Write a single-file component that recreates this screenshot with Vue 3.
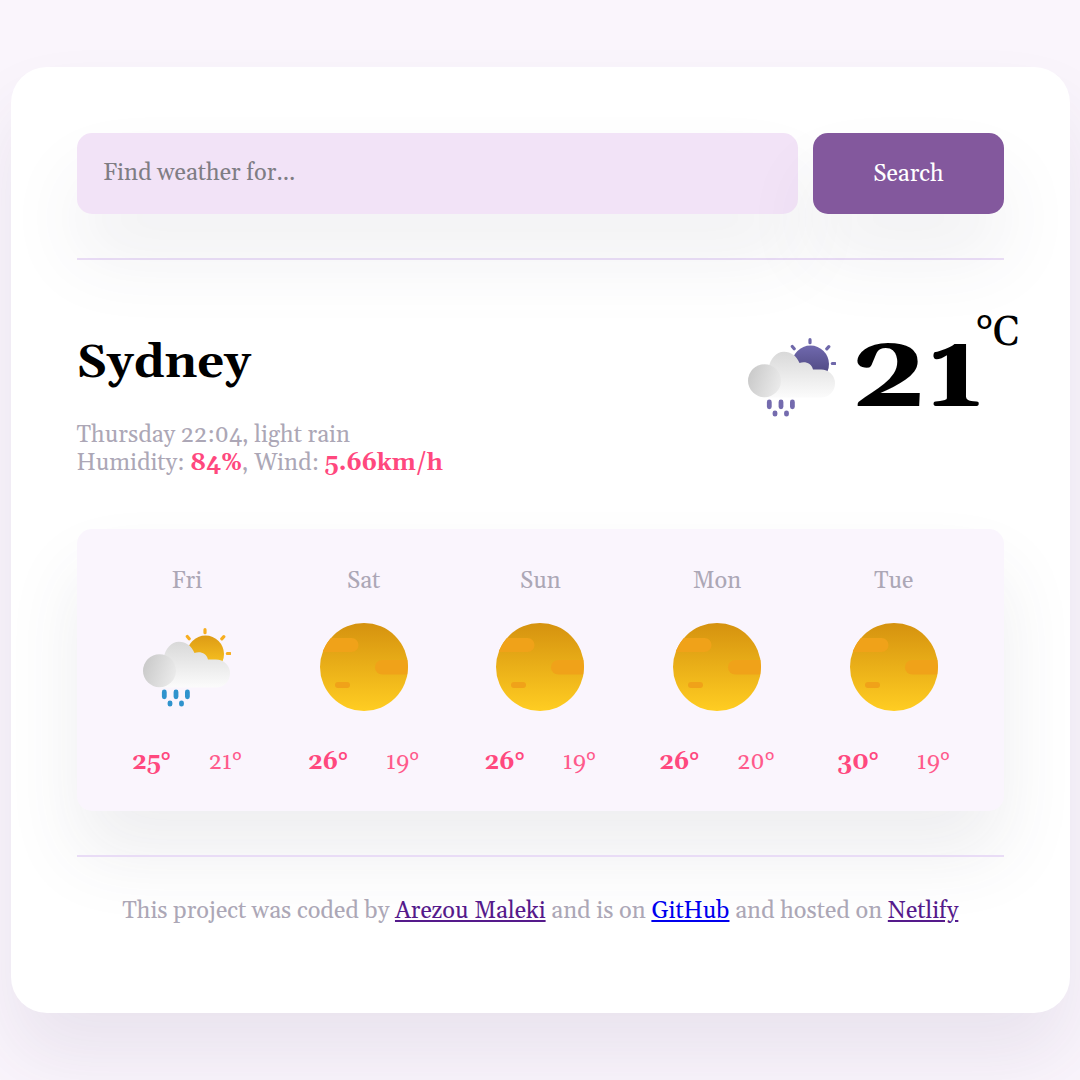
<script setup>
const days = [
  { name: 'Fri', icon: 'rain', max: 25, min: 21 },
  { name: 'Sat', icon: 'sun', max: 26, min: 19 },
  { name: 'Sun', icon: 'sun', max: 26, min: 19 },
  { name: 'Mon', icon: 'sun', max: 26, min: 20 },
  { name: 'Tue', icon: 'sun', max: 30, min: 19 },
]
</script>

<template>
  <div class="page">
    <svg class="defs" width="0" height="0" aria-hidden="true">
      <defs>
        <linearGradient id="sunFill" x1="0" y1="0" x2="0" y2="1">
          <stop offset="0" stop-color="#d5920f" />
          <stop offset="1" stop-color="#ffcd22" />
        </linearGradient>
        <linearGradient id="dayFill" x1="0" y1="0" x2="0" y2="1">
          <stop offset="0" stop-color="#dd9b15" />
          <stop offset="1" stop-color="#ffcc24" />
        </linearGradient>
        <linearGradient id="nightFill" x1="0" y1="0" x2="0" y2="1">
          <stop offset="0" stop-color="#7069ae" />
          <stop offset="1" stop-color="#453f74" />
        </linearGradient>
        <linearGradient id="cloudFill" gradientUnits="userSpaceOnUse" x1="0" y1="18" x2="0" y2="65">
          <stop offset="0" stop-color="#d8d8d8" />
          <stop offset="1" stop-color="#fcfcfc" />
        </linearGradient>
        <linearGradient id="puffFill" x1="0" y1="0.3" x2="1" y2="0.65">
          <stop offset="0" stop-color="#c9c9c9" />
          <stop offset="1" stop-color="#ebebeb" />
        </linearGradient>
        <clipPath id="sunClip"><circle cx="44" cy="44" r="44" /></clipPath>
        <g id="cloud">
          <path
            d="M16 64.500V35h4.500C22.500 26 28 18.800 36 18.800c7 0 12.500 4 15.500 11.200 5.500-2 12 0 13.500 6.500h8a14 14 0 0 1 0 28z"
            fill="url(#cloudFill)"
          />
          <circle cx="16.500" cy="47.700" r="16.500" fill="url(#puffFill)" />
        </g>
        <g id="rays" fill="none" stroke-width="3.200" stroke-linecap="round">
          <path d="M62 6.700v3M44.300 13.500l1.900 2.200M80.800 13.700l-2 2.100M84.300 30.500h2.700" />
        </g>
        <g id="drops" stroke-width="4.800" stroke-linecap="round">
          <path d="M21.300 69v4.800M33 69v4.800M44.400 69v4.800M27 79.800v1.400M38.500 79.800v1.400" />
        </g>
      </defs>
    </svg>

    <main class="card">
      <form class="search" @submit.prevent>
        <input type="text" placeholder="Find weather for..." />
        <button type="submit">Search</button>
      </form>

      <section class="current">
        <div>
          <h1>Sydney</h1>
          <p class="details">
            Thursday 22:04, light rain<br />
            Humidity: <strong>84%</strong>, Wind: <strong>5.66km/h</strong>
          </p>
        </div>
        <div class="now">
          <svg class="icon" viewBox="0 0 88 88">
            <use href="#rays" stroke="#6f68aa" />
            <circle cx="62.500" cy="31" r="18.500" fill="url(#nightFill)" />
            <use href="#cloud" />
            <use href="#drops" stroke="#746bae" />
          </svg>
          <span class="value">21</span>
          <span class="unit">°C</span>
        </div>
      </section>

      <section class="forecast">
        <div v-for="day in days" :key="day.name" class="day">
          <div class="name">{{ day.name }}</div>
          <svg v-if="day.icon === 'sun'" class="icon" viewBox="0 0 88 88">
            <circle cx="44" cy="44" r="44" fill="url(#sunFill)" />
            <g clip-path="url(#sunClip)" fill="#f0a219">
              <rect x="-10" y="15" width="48.500" height="14" rx="7" />
              <rect x="55" y="37" width="50" height="14.500" rx="7.250" />
              <rect x="15" y="59" width="15" height="6" rx="3" />
            </g>
          </svg>
          <svg v-else class="icon" viewBox="0 0 88 88">
            <use href="#rays" stroke="#f7ae20" />
            <circle cx="62.500" cy="31" r="18.500" fill="url(#dayFill)" />
            <use href="#cloud" />
            <use href="#drops" stroke="#2f93cd" />
          </svg>
          <div class="temps">
            <strong>{{ day.max }}°</strong>
            <span>{{ day.min }}°</span>
          </div>
        </div>
      </section>

      <footer>
        This project was coded by <a class="visited" href="#">Arezou Maleki</a> and is on
        <a href="#">GitHub</a> and hosted on <a class="visited" href="#">Netlify</a>
      </footer>
    </main>
  </div>
</template>

<style>
body {
  background: #faf5fc;
}
</style>

<style scoped>
.page {
  box-sizing: border-box;
  height: 1080px;
  overflow: hidden;
  padding: 67px 10px 0 10.500px;
  font-family: Georgia, Gelasio, serif;
  font-size: 23.570px;
  line-height: 28px;
  color: #aca7b6;
}
.defs {
  position: absolute;
}
.card {
  box-sizing: border-box;
  height: 946px;
  padding: 66px;
  border-radius: 36px;
  background: #fff;
  box-shadow: 0 44px 74px rgba(65, 50, 100, 0.09);
}
.search {
  display: flex;
  gap: 15px;
  height: 81px;
  padding-bottom: 44px;
  border-bottom: 2px solid #ecdff8;
}
.search input,
.search button {
  box-sizing: border-box;
  height: 81px;
  border: 0;
  border-radius: 15px;
  font: inherit;
  box-shadow: 0 44px 74px rgba(65, 65, 90, 0.08);
}
.search input {
  flex: 1;
  min-width: 0;
  padding: 0 26.500px 1px;
  background: #f2e3f7;
}
.search input::placeholder {
  color: #7f7d84;
}
.search button {
  width: 191px;
  padding-top: 2px;
  background: #83589d;
  color: #fff;
}
.current {
  display: flex;
  justify-content: space-between;
  height: 269px;
}
h1 {
  margin: 76px 0 0;
  font-size: 47.100px;
  line-height: 54px;
  color: #000;
}
.details {
  margin: 31px 0 0;
}
strong {
  color: #ff487e;
}
.icon {
  display: block;
  width: 88px;
  height: 88px;
}
.now {
  display: flex;
  align-items: flex-start;
  margin-right: -15.500px;
  color: #000;
}
.now .icon {
  margin-top: 73px;
}
.value {
  width: 119px;
  margin: 55px 0 0 15px;
  font-size: 106px;
  line-height: 120px;
  font-weight: 700;
  transform: scaleX(1.13);
  transform-origin: 0 50%;
}
.unit {
  margin: 50px 0 0 6px;
  font-size: 41.300px;
  line-height: 47px;
}
.forecast {
  box-sizing: border-box;
  display: flex;
  height: 282px;
  padding: 38px 22px 0;
  border-radius: 15px;
  background: #faf5fd;
  box-shadow: 0 44px 74px rgba(65, 65, 90, 0.09);
}
.day {
  flex: 1;
  display: flex;
  flex-direction: column;
  align-items: center;
}
.day .icon {
  margin-top: 28px;
}
.temps {
  display: flex;
  gap: 38px;
  margin-top: 37px;
  color: #ff5a8b;
}
footer {
  margin-top: 44px;
  padding-top: 40px;
  border-top: 2px solid #e9dcf6;
  text-align: center;
}
a {
  color: #0000ee;
  text-decoration: underline;
}
a.visited {
  color: #551a8b;
}
</style>
